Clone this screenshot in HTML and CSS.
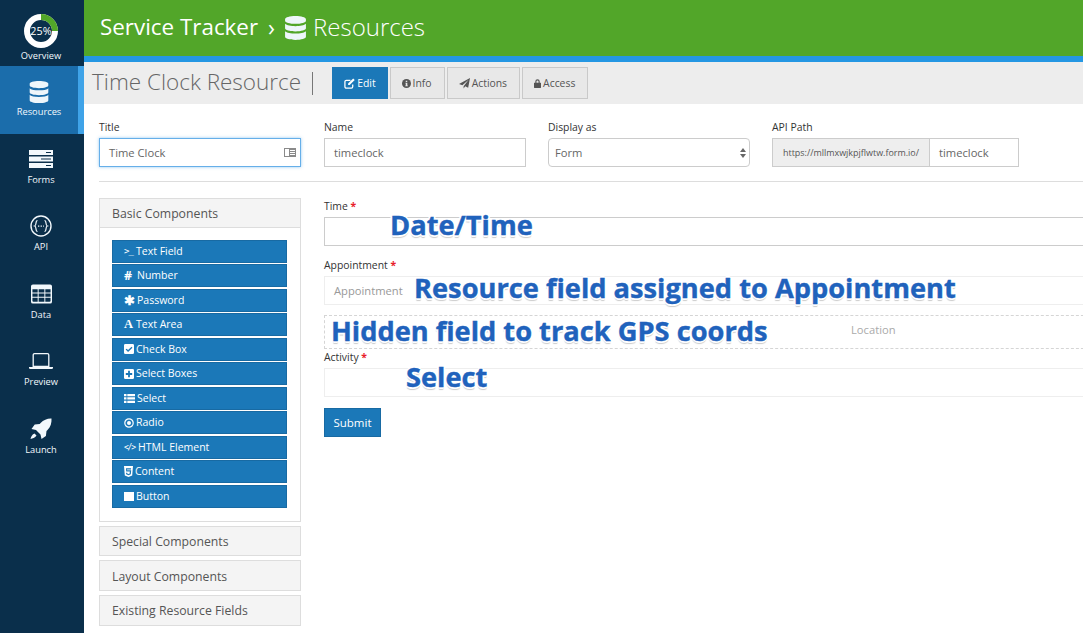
FILE: index.html
```html
<!DOCTYPE html>
<html lang="en">
<head>
<meta charset="utf-8">
<title>Service Tracker</title>
<link rel="stylesheet" href="styles.css">
</head>
<body>
<div class="app">
  <nav class="sidebar">
    <a class="nav-item overview">
      <span class="donut">
        <svg width="34" height="34" viewBox="1 1 34 34"><circle cx="18" cy="18" r="14" fill="none" stroke="#fff" stroke-width="6"/><path d="M18 4A14 14 0 0 1 32 18" fill="none" stroke="#52a629" stroke-width="6"/></svg>
        <span class="donut-text">25%</span>
      </span>
      <span>Overview</span>
    </a>
    <a class="nav-item active">
      <svg class="nav-icon" width="20" height="22" viewBox="0 0 20 23"><use href="#db"/></svg>
      <span>Resources</span>
    </a>
    <a class="nav-item">
      <svg class="nav-icon" width="24" height="18" viewBox="0 0 24 18"><path fill="#f2f8fc" fill-rule="evenodd" d="M0 0h24v5H0zM17 2v1h5V2zM0 6.5h24v5H0zM12 8.500v1h10v-1zM0 13h24v5H0zM17 15v1h5v-1z"/></svg>
      <span>Forms</span>
    </a>
    <a class="nav-item">
      <svg class="nav-icon" width="22" height="22" viewBox="0 0 22 22"><circle cx="11" cy="11" r="10" fill="none" stroke="#f2f8fc" stroke-width="1.4"/><path fill="none" stroke="#f2f8fc" stroke-width="1.2" d="M7.500 5.500C5.200 5.500 6.700 10.400 4.800 11c1.900.6.400 5.500 2.700 5.500M14.500 5.500c2.300 0 .8 4.900 2.700 5.500-1.900.6-.4 5.500-2.700 5.500"/><path stroke="#f2f8fc" stroke-width="1.200" stroke-dasharray="1.300 1.300" d="M8 11.200h6"/></svg>
      <span>API</span>
    </a>
    <a class="nav-item">
      <svg class="nav-icon" width="21" height="19" viewBox="0 0 22 20"><path fill="#f2f8fc" fill-rule="evenodd" d="M2 0h18a2 2 0 0 1 2 2v16a2 2 0 0 1-2 2H2a2 2 0 0 1-2-2V2a2 2 0 0 1 2-2zM1.500 5v3.500h5.500V5zM8 5v3.500h6V5zM15 5v3.500h5.500V5zM1.500 9.500V13h5.500V9.500zM8 9.500V13h6V9.500zM15 9.500V13h5.500V9.500zM1.500 14v3a1 1 0 0 0 1 1H7v-4zM8 14v4h6v-4zM15 14v4h4.500a1 1 0 0 0 1-1v-3z"/></svg>
      <span>Data</span>
    </a>
    <a class="nav-item">
      <svg class="nav-icon" width="24" height="16" viewBox="0 0 24 16"><path fill="none" stroke="#f2f8fc" stroke-width="1.300" d="M5.500.7h13a1.300 1.300 0 0 1 1.300 1.300v11.500H4.200V2A1.300 1.300 0 0 1 5.500.7z"/><path fill="#f2f8fc" d="M0 14h24v.7a1.300 1.300 0 0 1-1.300 1.300H1.300A1.300 1.300 0 0 1 0 14.700z"/></svg>
      <span>Preview</span>
    </a>
    <a class="nav-item">
      <svg class="nav-icon" width="22" height="22" viewBox="0 0 22 22"><path fill="#f2f8fc" d="M21.500.5c.3 4-.8 8.500-4 11.500l-1 .9-.6 5.100-4.400 3-1-4.500-4.500-4.500L1.500 11l3.200-4.400 5-.6.900-1C13.500 1.800 17.500.3 21.500.5zM4.500 15.500l2 2c-1.500 2.500-4 3-6 3.500.5-2 1.300-4.500 4-5.500z"/></svg>
      <span>Launch</span>
    </a>
  </nav>

  <div class="main">
    <header class="topbar">
      <span class="brand">Service Tracker</span>
      <span class="crumb-sep">›</span>
      <svg class="crumb-icon" width="21" height="24" viewBox="0 0 20 23"><use href="#db"/></svg>
      <span class="crumb">Resources</span>
    </header>

    <div class="subnav">
      <h1 class="page-title">Time Clock Resource</h1>
      <span class="title-bar"></span>
      <div class="tabs">
        <a class="tab tab-active">
          <svg width="11" height="11" viewBox="0 0 12 12"><path fill="none" stroke="currentColor" stroke-width="1.400" d="M9.500 7v2.500a1.500 1.500 0 0 1-1.500 1.500H2.500A1.500 1.500 0 0 1 1 9.500V4a1.500 1.500 0 0 1 1.500-1.500H7"/><path fill="currentColor" d="M4.500 6l5.500-5.500 1.700 1.700-5.500 5.500H4.500z"/></svg>
          Edit
        </a>
        <a class="tab">
          <svg width="9" height="9" viewBox="0 0 12 12"><circle cx="6" cy="6" r="6" fill="currentColor"/><path fill="#e8e8e8" d="M5 2.200h2v1.700H5zM4.600 5h2.500v3.500h.7v1.100H4.400V8.500H5V6.100h-.4z"/></svg>
          Info
        </a>
        <a class="tab">
          <svg width="11" height="11" viewBox="0 0 12 12"><path fill="currentColor" d="M12 0 10 10.500 6.800 9.100 5 11.500V9L10.500 2 3.700 8 0 6.500z"/></svg>
          Actions
        </a>
        <a class="tab">
          <svg width="7" height="9" viewBox="0 0 8 10"><path fill="currentColor" fill-rule="evenodd" d="M1.500 4V2.700a2.500 2.500 0 0 1 5 0V4H7.500a.5.500 0 0 1 .5.500v5a.5.500 0 0 1-.5.500H.5A.5.500 0 0 1 0 9.500v-5A.5.500 0 0 1 .5 4zM2.800 4h2.400V2.700a1.200 1.200 0 0 0-2.400 0z"/></svg>
          Access
        </a>
      </div>
    </div>

    <div class="settings">
      <div class="field field-title">
        <label class="label">Title</label>
        <div class="input focus">Time Clock
          <svg class="input-icon" width="12" height="9" viewBox="0 0 12 9"><path fill="#8a8a8a" fill-rule="evenodd" d="M0 0h12v9H0zM1 1v7h4V1zM6 2v1h5V2zM6 4v1h5V4zM6 6v1h5V6z"/></svg>
        </div>
      </div>
      <div class="field field-name">
        <label class="label">Name</label>
        <div class="input">timeclock</div>
      </div>
      <div class="field field-display">
        <label class="label">Display as</label>
        <div class="input select">Form
          <svg class="select-arrows" width="6" height="10" viewBox="0 0 6 10"><path fill="#666" d="M3 0l3 4H0zM3 10L0 6h6z"/></svg>
        </div>
      </div>
      <div class="field field-api">
        <label class="label">API Path</label>
        <div class="input-group">
          <span class="addon">https://mllmxwjkpjflwtw.form.io/</span>
          <span class="input group-input">timeclock</span>
        </div>
      </div>
    </div>

    <hr class="divider">

    <div class="builder">
      <aside class="palette">
        <section class="panel">
          <h2 class="panel-head">Basic Components</h2>
          <div class="panel-body">
            <a class="comp"><span class="glyph glyph-code w10">&gt;_</span>Text Field</a>
            <a class="comp"><span class="glyph glyph-bold w11">#</span>Number</a>
            <a class="comp"><span class="glyph glyph-bold w11">✱</span>Password</a>
            <a class="comp"><span class="glyph glyph-serif w10">A</span>Text Area</a>
            <a class="comp"><svg width="10" height="10" viewBox="0 0 11 11"><path fill="#fff" fill-rule="evenodd" d="M1.500 0h8A1.500 1.500 0 0 1 11 1.500v8A1.500 1.500 0 0 1 9.500 11h-8A1.500 1.500 0 0 1 0 9.500v-8A1.500 1.500 0 0 1 1.500 0zM4.500 8.700 9.300 4 8.300 3 4.500 6.700 2.800 5.100 1.800 6.100z"/></svg>Check Box</a>
            <a class="comp"><svg width="10" height="10" viewBox="0 0 11 11"><path fill="#fff" fill-rule="evenodd" d="M1.500 0h8A1.500 1.500 0 0 1 11 1.500v8A1.500 1.500 0 0 1 9.500 11h-8A1.500 1.500 0 0 1 0 9.500v-8A1.500 1.500 0 0 1 1.500 0zM4.500 2v2.500H2v2h2.500V9h2V6.500H9v-2H6.500V2z"/></svg>Select Boxes</a>
            <a class="comp"><svg width="11" height="9" viewBox="0 0 11 9"><path fill="#fff" d="M0 0h2.500v2.300H0zM3.300 0H11v2.300H3.300zM0 3.300h2.500v2.300H0zM3.300 3.300H11v2.300H3.300zM0 6.700h2.500V9H0zM3.300 6.700H11V9H3.300z"/></svg>Select</a>
            <a class="comp"><svg width="10" height="10" viewBox="0 0 10 10"><circle cx="5" cy="5" r="4.200" fill="none" stroke="#fff" stroke-width="1.200"/><circle cx="5" cy="5" r="2" fill="#fff"/></svg>Radio</a>
            <a class="comp"><span class="glyph glyph-code glyph-tags w12">&lt;/&gt;</span>HTML Element</a>
            <a class="comp"><svg width="9" height="11" viewBox="0 0 9 11"><path fill="#fff" fill-rule="evenodd" d="M0 0h9l-.8 9.500L4.500 11 .8 9.500zM2 2.300l.2 3.300h3.600L5.700 7.500l-1.200.5-1.200-.5-.1-.7H2l.2 1.500 2.300.9 2.300-.9.400-4H3.100L3 3.400h4l.1-1.100z"/></svg>Content</a>
            <a class="comp"><svg width="10" height="9" viewBox="0 0 10 9"><rect width="10" height="9" fill="#fff"/></svg>Button</a>
          </div>
        </section>
        <h2 class="panel-head collapsed collapsed-first">Special Components</h2>
        <h2 class="panel-head collapsed">Layout Components</h2>
        <h2 class="panel-head collapsed">Existing Resource Fields</h2>
      </aside>

      <form class="form-preview">
        <label class="label form-label">Time <span class="req">*</span></label>
        <div class="box box-strong"></div>
        <label class="label form-label label-gap">Appointment <span class="req">*</span></label>
        <div class="box box-light"><span class="placeholder">Appointment</span></div>
        <div class="box box-dashed"><span class="location">Location</span></div>
        <label class="label form-label label-tight">Activity <span class="req">*</span></label>
        <div class="box box-light"></div>
        <a class="submit">Submit</a>

        <span class="note note-time">Date/Time</span>
        <span class="note note-appointment">Resource field assigned to Appointment</span>
        <span class="note note-hidden">Hidden field to track GPS coords</span>
        <span class="note note-select">Select</span>
      </form>
    </div>
  </div>
</div>

<svg class="defs" width="0" height="0">
  <symbol id="db" viewBox="0 0 20 23">
    <path fill="#eef6fb" d="M10 0c5.500 0 10 1.300 10 3v1.500c0 1.700-4.500 3-10 3S0 6.200 0 4.500V3c0-1.700 4.500-3 10-3zM0 7.500c1.500 1.600 5.800 2.300 10 2.300s8.500-.7 10-2.300v4.300c0 1.700-4.500 3-10 3s-10-1.300-10-3zM0 14.500c1.500 1.600 5.800 2.300 10 2.300s8.500-.7 10-2.300V20c0 1.700-4.500 3-10 3s-10-1.300-10-3z"/>
  </symbol>
</svg>
</body>
</html>
```

FILE: styles.css
```css
* { box-sizing: border-box; }

html, body {
  margin: 0;
  height: 633px;
  overflow: hidden;
  background: #fff;
  font-family: "Open Sans", sans-serif;
}

a { display: block; }

.defs { position: absolute; }

.app {
  display: flex;
  width: 1083px;
  height: 633px;
  overflow: hidden;
}

/* Sidebar */
.sidebar {
  flex: 0 0 84px;
  background: #0a2f4b;
  color: #f2f8fc;
  font-size: 9.3px;
  line-height: 12px;
  display: flex;
  flex-direction: column;
}

.nav-item {
  height: 67.4px;
  display: flex;
  flex-direction: column;
  align-items: center;
  padding: 14px 2px 0 0;
}

.nav-icon { height: 22px; margin-bottom: 4px; }

.overview {
  height: 66px;
  padding-top: 14px;
  gap: 2px;
}

.donut {
  width: 34px;
  height: 34px;
  display: grid;
  place-items: center;
}

.donut svg, .donut-text { grid-area: 1 / 1; }

.donut-text {
  font-size: 10.8px;
  color: #fff;
}

.active {
  height: 68px;
  background: #1b6dab;
  border-right: 6px solid #3fa3e8;
  padding: 15px 0 0;
}

.active .nav-icon { margin-bottom: 3px; }

/* Top bars */
.main {
  flex: 1;
  min-width: 0;
  display: flex;
  flex-direction: column;
}

.topbar {
  flex: 0 0 62px;
  background: #52a629;
  border-bottom: 6px solid #2497e3;
  color: #fff;
  display: flex;
  align-items: center;
  padding: 0 0 0 16px;
}

.brand { font-size: 22.4px; margin-bottom: 3px; }
.crumb-sep { font-size: 23px; margin: 0 10px 3px 10px; }
.crumb { font-size: 24px; font-weight: 300; margin: 0 0 3px 7px; }
.crumb-icon { margin-bottom: 1px; }

.subnav {
  flex: 0 0 42px;
  background: #ededed;
  display: flex;
  align-items: center;
  padding-left: 8px;
}

.page-title {
  margin: 0 0 4px;
  font-size: 22.5px;
  font-weight: 300;
  color: #666;
  white-space: nowrap;
}

.title-bar {
  width: 1px;
  height: 23px;
  background: #777;
  margin: 0 19px 0 11px;
}

.tabs { display: flex; gap: 2px; }

.tab {
  height: 32px;
  padding: 0 12px 0 11px;
  display: flex;
  align-items: center;
  gap: 2px;
  font-size: 10.4px;
  color: #555;
  background: #e8e8e8;
  border: 1px solid #c9c9c9;
}

.tab-active {
  padding-right: 11px;
  background: #1b78b8;
  border-color: #1b78b8;
  color: #fff;
}

/* Settings row */
.settings {
  display: flex;
  padding: 17px 0 0 15px;
  height: 76px;
}

.field { flex: none; }
.field-title { width: 202px; margin-right: 23px; }
.field-name { width: 202px; margin-right: 22px; }
.field-display { width: 202px; margin-right: 22px; }
.field-api { width: 247px; }

.label {
  display: block;
  font-size: 10.4px;
  line-height: 12px;
  margin-bottom: 5px;
  color: #333;
}

.input {
  height: 29px;
  border: 1px solid #ccc;
  padding: 0 9px;
  font-size: 11.2px;
  line-height: 27px;
  color: #666;
  position: relative;
}

.focus {
  border-color: #66afe9;
  box-shadow: 0 0 3px rgba(102, 175, 233, .7);
}

.input-icon {
  position: absolute;
  right: 4px;
  top: 9px;
}

.select { border-radius: 4px; padding-left: 6px; }

.select-arrows {
  position: absolute;
  right: 3px;
  top: 9px;
}

.input-group { display: flex; height: 29px; }

.addon {
  flex: 0 0 158px;
  background: #eee;
  border: 1px solid #ccc;
  font-size: 8.95px;
  line-height: 27px;
  text-align: center;
  color: #555;
  white-space: nowrap;
}

.group-input { flex: 1; border-left: 0; }

.divider {
  margin: 1px 0 0 15px;
  border: 0;
  border-top: 1px solid #ddd;
}

/* Builder */
.builder {
  display: flex;
  align-items: flex-start;
  padding: 16px 0 0 15px;
  gap: 23px;
}

.palette { flex: 0 0 202px; }

.panel {
  border: 1px solid #ddd;
  border-top: 0;
  margin-bottom: 4px;
}

.panel-head {
  margin: 0;
  height: 30px;
  background: #f4f4f4;
  border: 1px solid #ddd;
  padding-left: 12px;
  font-size: 12.25px;
  font-weight: 400;
  line-height: 29px;
  color: #555;
}

.panel .panel-head {
  margin: 0 -1px;
  width: 202px;
}

.collapsed {
  height: 31px;
  margin-bottom: 4px;
}

.collapsed-first {
  height: 30px;
  line-height: 30px;
}

.collapsed-first + .collapsed { line-height: 31px; }

.panel-body {
  padding: 11.75px 13px 13.25px 12px;
  display: flex;
  flex-direction: column;
  gap: 1.5px;
}

.comp {
  height: 23px;
  background: #1b78b8;
  border: 1px solid #186aa3;
  color: #fff;
  font-size: 10.5px;
  line-height: 21px;
  padding-left: 11px;
  display: flex;
  align-items: center;
  gap: 2px;
  white-space: nowrap;
}

.glyph { flex: none; white-space: nowrap; }
.w10 { width: 10px; }
.w11 { width: 11px; }
.w12 { width: 12px; }

.glyph-code { font-size: 9px; font-family: "DejaVu Sans Mono", monospace; letter-spacing: -1px; }
.glyph-tags { font-size: 8px; letter-spacing: -1.2px; }
.glyph-bold { font-weight: 700; font-size: 12.5px; text-align: left; }
.glyph-serif { font-family: "Liberation Serif", serif; font-weight: 700; font-size: 12.5px; }

/* Form preview */
.form-preview {
  flex: 0 0 790px;
  position: relative;
}

.form-label { margin-bottom: 5px; margin-top: 2px; }
.label-gap { margin-top: 13px; }
.label-tight { margin-top: 2px; }
.req { color: #e8202a; font-weight: 700; }

.box { height: 29px; position: relative; font-size: 11.2px; line-height: 27px; }
.box-strong { border: 1px solid #ccc; }
.box-light { border: 1px solid #eee; }

.box-dashed {
  height: 34px;
  margin-top: 10px;
  border: 1px dashed #d5d5d5;
}

.placeholder { margin-left: 9px; color: #999; }

.location {
  position: absolute;
  left: 526px;
  top: 0;
  color: #aaa;
}

.submit {
  width: 57px;
  height: 29px;
  margin-top: 11px;
  background: #1b78b8;
  border: 1px solid #186aa3;
  color: #fff;
  font-size: 11.5px;
  line-height: 27px;
  text-align: center;
}

/* Annotations laid over the form */
.note {
  position: absolute;
  font-size: 27.25px;
  font-weight: 700;
  line-height: 32px;
  color: #2062bc;
  white-space: nowrap;
  -webkit-text-stroke: .4px #2062bc;
  text-shadow: 2px 0 0 #fff, -2px 0 0 #fff, 0 -2px 0 #fff, 0 2px 0 #fff, 1px 1px 0 #fff, -1px -1px 0 #fff, 1px -1px 0 #fff, -1px 1px 0 #fff, 0 3px 1px #ccc;
}

.note-time { left: 66px; top: 11px; }
.note-appointment { left: 90px; top: 74px; }
.note-hidden { left: 7px; top: 117px; }
.note-select { left: 82px; top: 163px; }
```
